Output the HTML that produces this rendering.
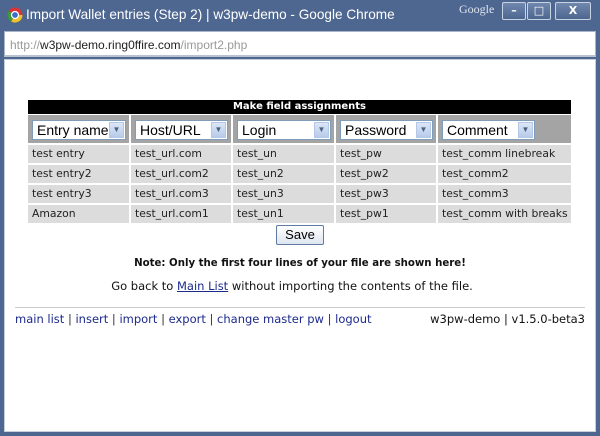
<!DOCTYPE html>
<html><head><style>
*{margin:0;padding:0;box-sizing:border-box}
body{width:600px;height:436px;overflow:hidden;background:#4e6790;font-family:"DejaVu Sans",Verdana,sans-serif;position:relative}
.a{position:absolute}
.title{left:26px;top:7px;color:#fff;font-family:"Liberation Sans",Tahoma,sans-serif;font-size:13.6px;white-space:nowrap}
.btn{top:2px;height:18px;border:1px solid #c8d4e4;border-radius:2px;background:linear-gradient(#7088ad,#4d6690);color:#fff;font-size:11px;text-align:center;line-height:16px;font-weight:bold}
.url{left:4px;top:31px;width:592px;height:26px;background:#fff;border:1px solid #aab6c8;border-bottom:2px solid #b8c2d0;font-family:"Liberation Sans",Tahoma,sans-serif;font-size:12px;padding:6px 0 0 5px;color:#999}
.url b{font-weight:normal;color:#222}
.page{left:4px;top:59px;width:592px;height:373px;background:#fff;border:1px solid #c5cfdc}
.hdr{left:28px;top:100px;width:543px;height:14px;background:#000;color:#fff;font-size:10px;font-weight:bold;text-align:center;line-height:14px}
.sel{top:115px;height:28px;background:#a4a4a4}
.sb{position:absolute;top:5px;left:4px;height:20px;background:#fff;border:1px solid #7f9db9;font-family:"Liberation Sans",Arial,sans-serif;font-size:14px;line-height:18px;padding-left:4px;color:#000}
.sb i{position:absolute;right:1px;top:1px;width:15px;height:16px;background:linear-gradient(#dbe6f6,#b7cbea);border:1px solid #b4c7e6;font-style:normal;font-size:8px;color:#4d6185;text-align:center;line-height:14px}
.c{height:18px;background:#dcdcdc;font-size:10.8px;line-height:18px;padding-left:4px;color:#222;white-space:nowrap;overflow:hidden}
.save{left:276px;top:225px;width:48px;height:20px;border:1px solid #5f7aa3;border-radius:2px;background:linear-gradient(#fff,#dfe6f0);font-family:"Liberation Sans",Arial,sans-serif;font-size:13px;text-align:center;line-height:18px}
.t{font-size:11.5px;color:#111;white-space:nowrap}
a{color:#1c2a8c}
</style></head><body>
<svg class="a" style="left:7px;top:7px" width="16" height="16"><circle cx="8" cy="8" r="7.5" fill="#d33"/><path d="M8 8 L15.5 8 A7.5 7.5 0 0 1 4.2 14.5Z" fill="#eec22a"/><path d="M8 8 L4.2 14.5 A7.5 7.5 0 0 1 0.5 8 A7.5 7.5 0 0 1 1.5 4Z" fill="#3a9a3a"/><circle cx="8" cy="8" r="3.5" fill="#3c6ec8" stroke="#fff" stroke-width="1.3"/></svg>
<div class="a title">Import Wallet entries (Step 2) | w3pw-demo - Google Chrome</div>
<div class="a" style="left:459px;top:2px;color:#dfe5ef;font-family:'Liberation Serif',serif;font-size:12px">Google</div>
<div class="a btn" style="left:502px;width:24px">–</div>
<div class="a btn" style="left:527px;width:24px">□</div>
<div class="a btn" style="left:555px;width:36px">X</div>
<div class="a url">http://<b>w3pw-demo.ring0ffire.com</b>/import2.php</div>
<div class="a page"></div>
<div class="a hdr">Make field assignments</div>
<div class="a sel" style="left:28px;width:101px"><div class="sb" style="width:94px">Entry name<i>▼</i></div></div>
<div class="a sel" style="left:131px;width:100px"><div class="sb" style="width:93px">Host/URL<i>▼</i></div></div>
<div class="a sel" style="left:233px;width:101px"><div class="sb" style="width:94px">Login<i>▼</i></div></div>
<div class="a sel" style="left:336px;width:100px"><div class="sb" style="width:93px">Password<i>▼</i></div></div>
<div class="a sel" style="left:438px;width:133px"><div class="sb" style="width:93px">Comment<i>▼</i></div></div>
<div class="a" style="left:28px;top:145px;width:543px">
<div style="display:grid;grid-template-columns:101px 100px 101px 100px 133px;column-gap:2px;row-gap:2px">
<div class="c">test entry</div><div class="c">test_url.com</div><div class="c">test_un</div><div class="c">test_pw</div><div class="c">test_comm linebreak</div>
<div class="c">test entry2</div><div class="c">test_url.com2</div><div class="c">test_un2</div><div class="c">test_pw2</div><div class="c">test_comm2</div>
<div class="c">test entry3</div><div class="c">test_url.com3</div><div class="c">test_un3</div><div class="c">test_pw3</div><div class="c">test_comm3</div>
<div class="c">Amazon</div><div class="c">test_url.com1</div><div class="c">test_un1</div><div class="c">test_pw1</div><div class="c">test_comm with breaks</div>
</div></div>
<div class="a save">Save</div>
<div class="a t" style="left:0;width:600px;top:258px;text-align:center;font-weight:bold;font-size:10.2px">Note: Only the first four lines of your file are shown here!</div>
<div class="a t" style="left:0;width:584px;top:279px;text-align:center">Go back to <a href="#">Main List</a> without importing the contents of the file.</div>
<div class="a" style="left:15px;top:307px;width:570px;height:1px;background:#ccc"></div>
<div class="a t" style="left:15px;top:312px;color:#1c2a8c">main list <span style="color:#333">|</span> insert <span style="color:#333">|</span> import <span style="color:#333">|</span> export <span style="color:#333">|</span> change master pw <span style="color:#333">|</span> logout</div>
<div class="a t" style="right:15px;top:312px">w3pw-demo | v1.5.0-beta3</div>
</body></html>
